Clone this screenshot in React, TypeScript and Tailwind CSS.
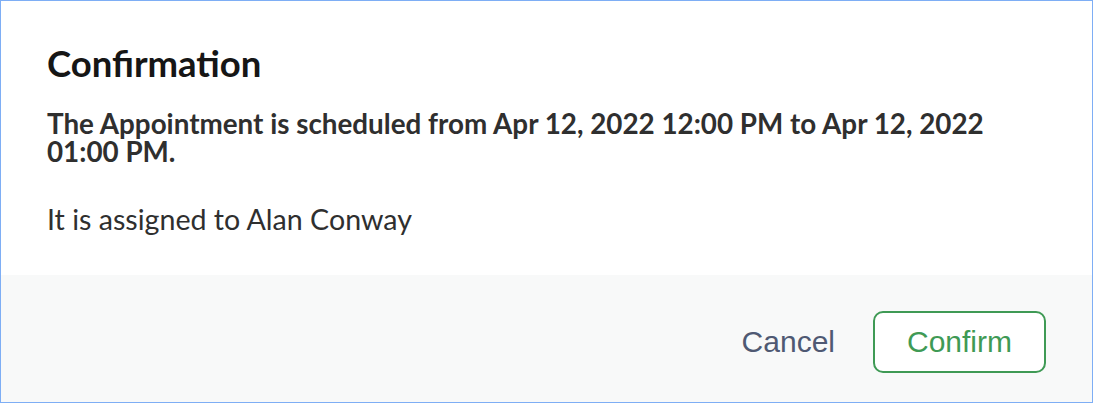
export default function App() {
  return (
    <div className="h-[403px] w-[1093px] border border-[#7eaef5] bg-white flex flex-col" style={{ fontFamily: 'Lato, "Noto Sans", sans-serif' }}>
      <div className="h-[274px] px-[46px] pt-[41px]">
        <h1 className="text-[36.5px] font-bold leading-[42px] text-[#161616]">Confirmation</h1>
        <p className="mt-[26px] text-[27.8px] font-bold leading-[28px] text-[#2f2f2f]">
          The Appointment is scheduled from Apr 12, 2022 12:00 PM to Apr 12, 2022 01:00 PM.
        </p>
        <p className="mt-[36px] text-[28.6px] leading-[34px] text-[#2f2f2f]">It is assigned to Alan Conway</p>
      </div>
      <div className="flex flex-1 items-center justify-end gap-[38px] bg-[#f8f9f9] px-[46px] pt-[6px]" style={{ fontFamily: '"Liberation Sans", Arial, sans-serif' }}>
        <button className="text-[30px] text-[#4f5973]">Cancel</button>
        <button className="h-[62px] w-[173px] rounded-[10px] border-2 border-[#3f9a55] bg-white text-[30px] text-[#3f9a55]">Confirm</button>
      </div>
    </div>
  );
}
